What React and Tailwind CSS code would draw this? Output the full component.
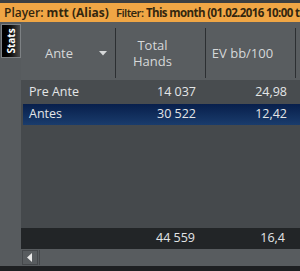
export default function App() {
  const font = { fontFamily: '"Open Sans", "Noto Sans", sans-serif' };
  return (
    <div className="w-[300px] h-[271px] bg-[#1e2022] flex flex-col overflow-hidden" style={font}>
      <div className="h-[3px] bg-[#3c3f42] shrink-0" />
      <div className="h-[19px] shrink-0 bg-[#f0a645] text-[12px] leading-[19px] text-[#33260f] pl-[4px] whitespace-nowrap overflow-hidden">
        <span className="font-semibold">Player: </span>
        <span className="font-bold">mtt (Alias)</span>
        <span className="text-[11.5px] tracking-[-0.6px]">
          <span className="font-semibold ml-[7px]">Filter: </span>
          <span className="font-bold">This month (01.02.2016 10:00 to 29.02.2016)</span>
        </span>
      </div>
      <div className="h-[244px] shrink-0 flex">
        <div className="w-[21px] shrink-0 bg-[#575b5e] pt-[2px] pl-[1px]">
          <div className="w-[20px] h-[34px] border border-[#7d8184] bg-gradient-to-r from-[#000000] via-[#111111] to-[#4a4a4a] flex items-center justify-center">
            <span className="-rotate-90 text-white text-[10px] font-bold leading-none">Stats</span>
          </div>
        </div>
        <div className="flex-1 flex flex-col min-w-0">
          <div className="h-[58px] shrink-0 bg-[#595d60] flex text-[13px] text-[#d6d8d9] leading-[16px]">
            <div className="w-[94px] shrink-0 flex items-center pt-[4px]">
              <div className="flex-1 text-center pl-[2px]">Ante</div>
              <svg width="8" height="5" viewBox="0 0 8 5" className="mr-[8px] ml-[4px]"><path d="M0 0 H8 L4 4.5 Z" fill="#d6d8d9" /></svg>
            </div>
            <div className="w-[1px] bg-[#2c2f32] mt-[6px] mb-[2px]" />
            <div className="w-[89px] shrink-0 flex items-center justify-center pr-[16px] pt-[4px] text-center">Total<br />Hands</div>
            <div className="w-[1px] bg-[#2c2f32] mt-[6px] mb-[2px]" />
            <div className="w-[89px] shrink-0 flex items-center justify-center pr-[16px] pt-[4px]">EV bb/100</div>
            <div className="w-[1px] bg-[#2c2f32] mt-[6px] mb-[2px]" />
            <div className="flex-1" />
          </div>
          <div className="flex-1 bg-[#45494c] text-[12.5px] text-[#e4e6e7]">
            <div className="h-[24px] flex items-center bg-[#484c4f]">
              <div className="w-[94px] pl-[8px]">Pre Ante</div>
              <div className="w-[90px] text-right pr-[9px]">14 037</div>
              <div className="w-[90px] text-right pr-[8px]">24,98</div>
            </div>
            <div className="h-[21px] ml-[2px] flex items-center bg-gradient-to-b from-[#081f4c] to-[#1a3c6c]">
              <div className="w-[92px] pl-[6px]">Antes</div>
              <div className="w-[90px] text-right pr-[9px]">30 522</div>
              <div className="w-[90px] text-right pr-[8px]">12,42</div>
            </div>
          </div>
          <div className="h-[21px] shrink-0 bg-[#222527] flex items-center text-[12.5px] text-[#e4e6e7]">
            <div className="w-[94px]" />
            <div className="w-[90px] text-right pr-[10px]">44 559</div>
            <div className="w-[90px] text-right pr-[10px]">16,4</div>
          </div>
          <div className="h-[17px] shrink-0 bg-[#585c5f] flex pt-[1px] pb-[1px]">
            <div className="w-[16px] ml-[1px] border border-[#45484b] flex items-center justify-center">
              <svg width="6" height="9" viewBox="0 0 6 9"><path d="M5 0 V9 L0 4.5 Z" fill="#e8e8e8" /></svg>
            </div>
            <div className="flex-1 ml-[1px] border-l border-[#45484b]" />
          </div>
        </div>
      </div>
    </div>
  );
}
